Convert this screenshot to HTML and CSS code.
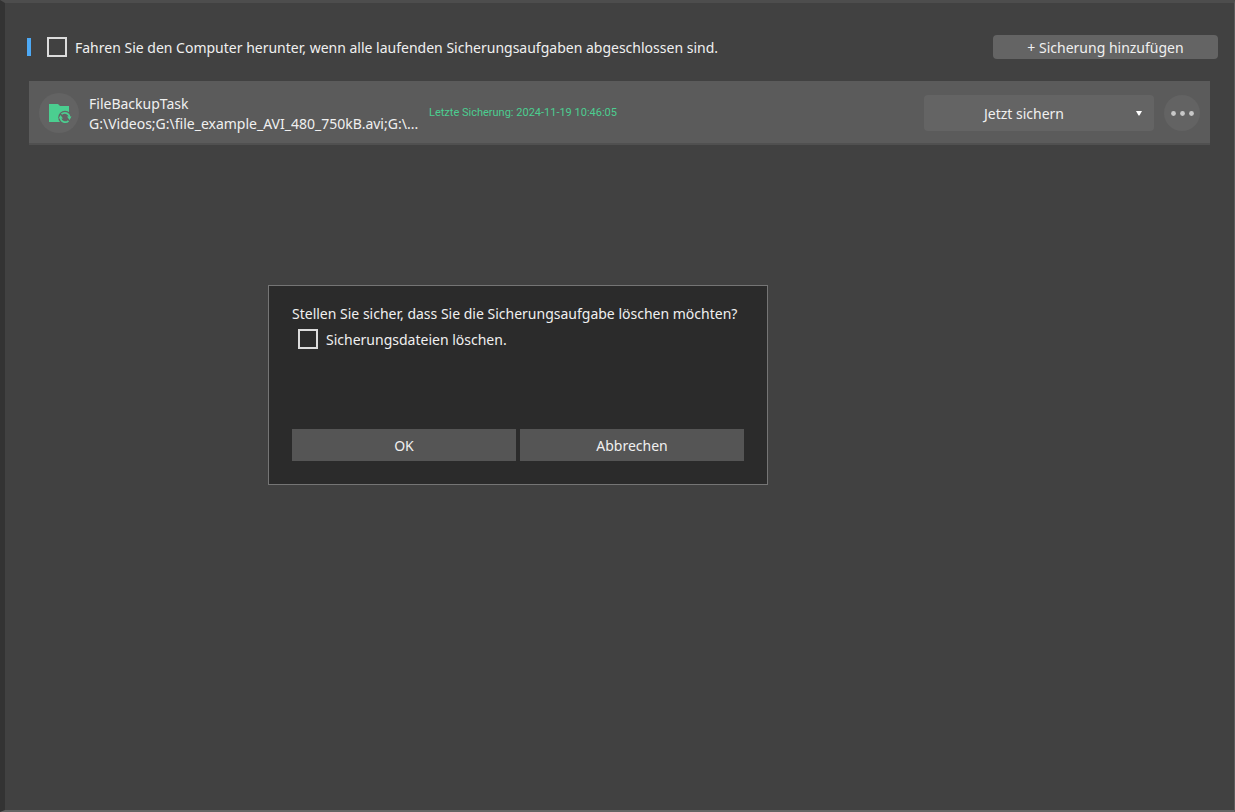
FILE: index.html
```html
<!DOCTYPE html>
<html lang="de">
<head>
<meta charset="utf-8">
<meta name="viewport" content="width=device-width, initial-scale=1">
<title>Sicherung</title>
<link rel="stylesheet" href="styles.css">
</head>
<body>
<main class="panel">
  <header class="toolbar">
    <span class="accent"></span>
    <label class="check"><input type="checkbox"><span class="check-label">Fahren Sie den Computer herunter, wenn alle laufenden Sicherungsaufgaben abgeschlossen sind.</span></label>
    <button class="add" type="button">+ Sicherung hinzufügen</button>
  </header>
  <ul class="tasks">
    <li class="task">
      <span class="task-icon">
        <svg width="40" height="40" viewBox="0 0 40 40" aria-hidden="true">
          <path fill="#4bce90" d="M10 11h9l2 2h9v16H10z"/>
          <circle cx="26" cy="24.500" r="6.800" fill="#636363"/>
          <path fill="none" stroke="#4bce90" stroke-width="1.700" d="M22.500 21.200A4.700 4.700 0 0 1 30.500 24M29.500 27.800A4.700 4.700 0 0 1 21.500 25"/>
          <path fill="#4bce90" d="M28 23.500h4.500L30.500 27zM19.500 25.500l2-3.500 2.500 3.500z"/>
        </svg>
      </span>
      <div class="task-text">
        <div class="task-name">FileBackupTask</div>
        <div class="task-path">G:\Videos;G:\file_example_AVI_480_750kB.avi;G:\...</div>
      </div>
      <div class="task-status">Letzte Sicherung: 2024-11-19 10:46:05</div>
      <div class="split">
        <button class="split-main" type="button">Jetzt sichern</button>
        <button class="split-menu" type="button" aria-label="Sicherungsart wählen"><svg width="6" height="5" viewBox="0 0 6 5" aria-hidden="true"><path fill="#fff" d="M0 0h6L3.500 4.500h-1z"/></svg></button>
      </div>
      <button class="more" type="button" aria-label="Weitere Optionen"><svg width="24" height="6" viewBox="0 0 24 6" aria-hidden="true"><g fill="#c8c8c8"><circle cx="3.500" cy="3.500" r="2.400"/><circle cx="12.500" cy="3.500" r="2.400"/><circle cx="21.500" cy="3.500" r="2.400"/></g></svg></button>
    </li>
  </ul>
</main>
<dialog class="confirm" open aria-labelledby="confirm-text">
  <p class="confirm-text" id="confirm-text">Stellen Sie sicher, dass Sie die Sicherungsaufgabe löschen möchten?</p>
  <label class="check confirm-check"><input type="checkbox"><span class="check-label">Sicherungsdateien löschen.</span></label>
  <div class="confirm-actions">
    <button type="button">OK</button>
    <button type="button">Abbrechen</button>
  </div>
</dialog>
</body>
</html>
```
FILE: styles.css
```css
* {
  box-sizing: border-box;
}

body {
  margin: 0;
  min-height: 100vh;
  display: flex;
  background: #414141;
  color: #f0f0f0;
  font: 14px/20px "Noto Sans", "Open Sans", sans-serif;
}

button {
  border: 0;
  margin: 0;
  padding: 2px 0 0;
  background: #646464;
  color: inherit;
  font: inherit;
}

.panel {
  flex: 1;
  min-width: 0;
  border: solid #4d4d4d;
  border-width: 3px 1px 2px 5px;
  border-left-color: #333;
  border-bottom-color: #646464;
  border-right-color: #5c5c5c;
  padding: 32px 16px 0 22px;
}

.toolbar {
  display: flex;
  align-items: center;
}

.accent {
  width: 4px;
  height: 18px;
  margin-right: 16px;
  background: #4da9f5;
}

.check {
  display: flex;
  align-items: flex-start;
  gap: 8px;
  height: 20px;
}

.check-label {
  padding-top: 1px;
}

.check input {
  appearance: none;
  flex: none;
  width: 20px;
  height: 20px;
  margin: 0;
  border: 2px solid #dcdcdc;
}

.add {
  width: 225px;
  height: 24px;
  margin-left: auto;
  border-radius: 4px;
}

.tasks {
  list-style: none;
  margin: 22px 8px 0 2px;
  padding: 0;
}

.task {
  display: flex;
  align-items: center;
  height: 64px;
  padding: 2px 10px 0;
  background: #5b5b5b;
  border-bottom: 2px solid #505050;
}

.task-icon {
  width: 40px;
  height: 40px;
  margin-right: 10px;
  border-radius: 50%;
  background: #636363;
}

.task-text {
  width: 330px;
  margin-right: 10px;
  padding-top: 2px;
  white-space: nowrap;
}

.task-status {
  color: #4bce90;
  font: 11px/20px Roboto, "Noto Sans", sans-serif;
}

.split {
  display: flex;
  width: 230px;
  height: 36px;
  margin-left: auto;
  margin-right: 10px;
  border-radius: 4px;
  overflow: hidden;
}

.split-main {
  flex: 1;
}

.split-menu {
  width: 30px;
  display: flex;
  align-items: center;
  justify-content: center;
  padding: 0;
}

.more {
  display: flex;
  align-items: center;
  justify-content: center;
  width: 36px;
  height: 36px;
  padding: 0;
  border-radius: 50%;
  background: #636363;
}

.confirm {
  position: absolute;
  top: 285px;
  left: 268px;
  display: flex;
  flex-direction: column;
  width: 500px;
  height: 200px;
  margin: 0;
  padding: 18px 23px 23px;
  border: 1px solid #757575;
  background: #2b2b2b;
  color: inherit;
}

.confirm-text {
  margin: 0 0 5px;
}

.confirm-check {
  align-self: flex-start;
  margin-left: 6px;
}

.confirm-actions {
  display: grid;
  grid-template-columns: 1fr 1fr;
  gap: 4px;
  margin-top: auto;
}

.confirm-actions button {
  height: 32px;
  background: #555;
}
```
